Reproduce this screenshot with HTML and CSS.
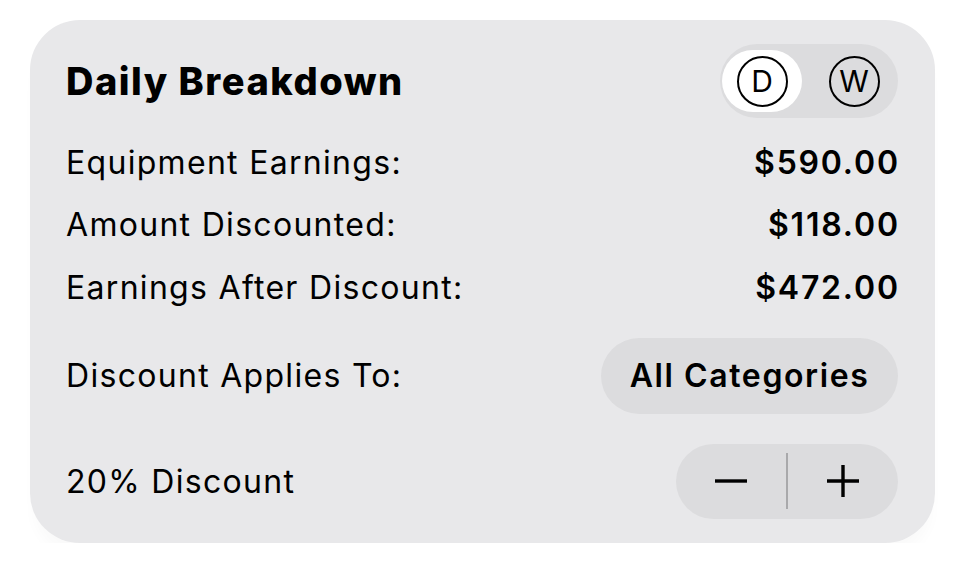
FILE: index.html
```html
<!DOCTYPE html>
<html>
<head>
<meta charset="utf-8">
<link rel="stylesheet" href="styles.css">
</head>
<body>
<div class="card">
  <div class="header">
    <h1 class="title">Daily Breakdown</h1>
    <div class="seg">
      <div class="seg-item active">
        <span class="circ">D</span>
      </div>
      <div class="seg-item">
        <span class="circ">W</span>
      </div>
    </div>
  </div>
  <div class="rows">
    <div class="row"><span class="label">Equipment Earnings:</span><span class="value">$590.00</span></div>
    <div class="row"><span class="label">Amount Discounted:</span><span class="value">$118.00</span></div>
    <div class="row"><span class="label">Earnings After Discount:</span><span class="value">$472.00</span></div>
  </div>
  <div class="row applies">
    <span class="label">Discount Applies To:</span>
    <span class="pill">All Categories</span>
  </div>
  <div class="row disc">
    <span class="label">20% Discount</span>
    <div class="stepper">
      <span class="step">
        <svg width="32" height="32" viewBox="0 0 32 32"><path d="M0 16H32" stroke="#000" stroke-width="3.4"/></svg>
      </span>
      <span class="divider"></span>
      <span class="step">
        <svg width="32" height="32" viewBox="0 0 32 32"><path d="M0 16H32M16 0V32" stroke="#000" stroke-width="3.4"/></svg>
      </span>
    </div>
  </div>
</div>
</body>
</html>
```

FILE: styles.css
```css
html, body {
  margin: 0;
  padding: 0;
  background: #ffffff;
}
body {
  font-family: Inter, "Noto Sans", sans-serif;
  color: #000;
  padding: 20px 29px 0 30px;
}
.card {
  background: #e8e8ea;
  border-radius: 50px;
  padding: 24px 37px 24px 36px;
  height: 523px;
  box-sizing: border-box;
  display: flex;
  flex-direction: column;
  box-shadow: 0 16px 14px -4px rgba(0,0,0,0.025);
}
.header {
  display: flex;
  justify-content: space-between;
  align-items: center;
  height: 74px;
}
.title {
  margin: 0;
  font-size: 38px;
  font-weight: 800;
  letter-spacing: 1.5px;
}
.seg {
  display: flex;
  background: #dcdcde;
  border-radius: 37px;
  height: 74px;
  width: 178px;
  padding: 6px 2px;
  box-sizing: border-box;
  align-items: center;
}
.seg-item {
  width: 80px;
  height: 62px;
  border-radius: 31px;
  display: flex;
  align-items: center;
  justify-content: center;
}
.seg-item + .seg-item {
  margin-left: 12px;
}
.seg-item.active {
  background: #ffffff;
}
.circ {
  width: 47px;
  height: 47px;
  border: 2.6px solid #000;
  border-radius: 50%;
  display: flex;
  align-items: center;
  justify-content: center;
  font-size: 30px;
  font-weight: 400;
}
.rows {
  margin-top: 13px;
  display: flex;
  flex-direction: column;
}
.row {
  display: flex;
  justify-content: space-between;
  align-items: center;
  height: 62.5px;
  font-size: 32px;
  letter-spacing: 1.3px;
}
.label {
  font-weight: 400;
}
.value {
  font-weight: 600;
  letter-spacing: 1.8px;
  margin-right: -1.8px;
}
.applies {
  margin-top: 19px;
  height: 76px;
}
.pill {
  background: #dcdcde;
  border-radius: 38px;
  height: 76px;
  width: 297px;
  display: flex;
  align-items: center;
  justify-content: center;
  font-weight: 600;
  letter-spacing: 1.6px;
  box-sizing: border-box;
}
.disc {
  margin-top: 30px;
  height: 75px;
}
.stepper {
  background: #dcdcde;
  border-radius: 38px;
  height: 75px;
  width: 222px;
  display: flex;
  align-items: center;
}
.step {
  flex: 1;
  display: flex;
  align-items: center;
  justify-content: center;
}
.step svg {
  display: block;
}
.divider {
  width: 2px;
  height: 56px;
  background: #a9a9ab;
}
```
